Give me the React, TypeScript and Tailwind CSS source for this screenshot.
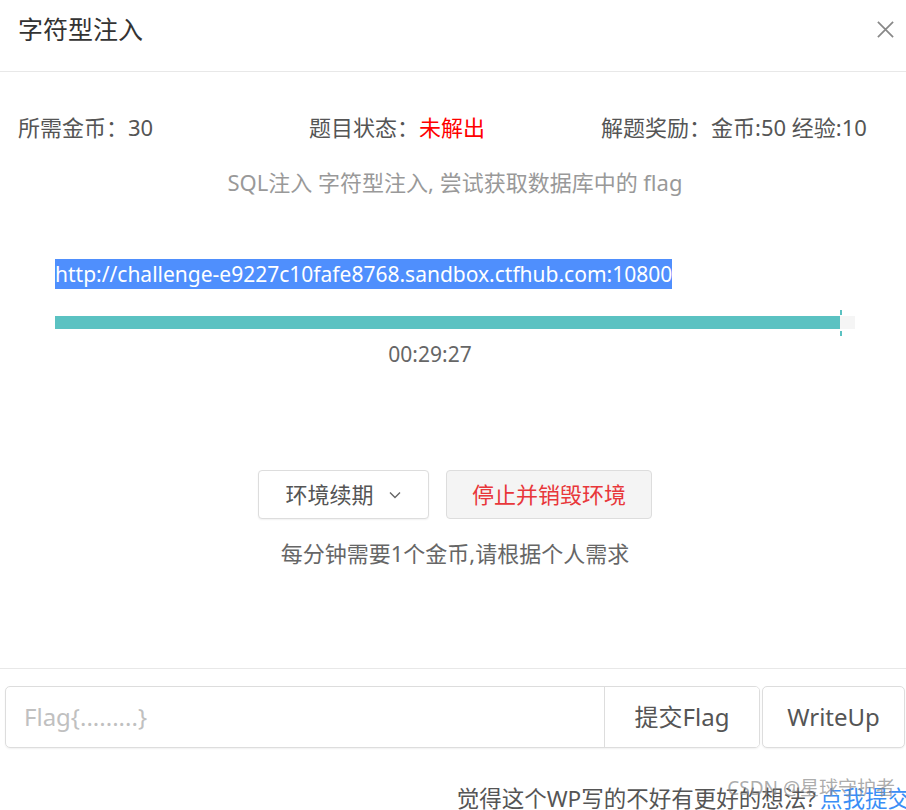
import React from 'react';

const font = { fontFamily: '"Noto Sans", "Noto Sans CJK SC", sans-serif' };

export default function App() {
  return (
    <div className="w-[906px] h-[810px] bg-white overflow-hidden relative" style={font}>
      {/* Header */}
      <div className="h-[72px] flex items-start justify-between pl-[18px] pr-[11px] pt-[13px] border-b border-[#e8e8e8]">
        <span className="text-[25px] leading-[32px] text-[#333]">字符型注入</span>
        <svg width="19" height="19" viewBox="0 0 20 20" className="text-[#888] mt-[7px]">
          <path d="M2 2 L18 18 M18 2 L2 18" stroke="currentColor" strokeWidth="1.8" />
        </svg>
      </div>

      {/* Info row */}
      <div className="flex items-center pl-[18px] pt-[40px] text-[22px] text-[#555] leading-[30px] whitespace-nowrap">
        <span className="w-[291px]">所需金币：30</span>
        <span className="w-[292px]">题目状态：<span className="text-[#f00]">未解出</span></span>
        <span>解题奖励：金币:50 经验:10</span>
      </div>

      <div className="text-center text-[22px] text-[#999] mt-[25px] leading-[30px] pl-[4px]">
        SQL注入 字符型注入, 尝试获取数据库中的 flag
      </div>

      {/* URL + progress */}
      <div className="px-[55px] pt-[62px]">
        <span className="bg-[#4f8ffd] text-white text-[21px] leading-[30px] inline-block">
          http://challenge-e9227c10fafe8768.sandbox.ctfhub.com:10800
        </span>
        <div className="mt-[27px] relative w-[800px] h-[13px] bg-[#f5f5f5]">
          <div className="h-full w-[785px] bg-[#5bc2c2]" />
          <div className="absolute left-[785px] -top-[6px] w-[2px] h-[26px] flex flex-col justify-between">
            <div className="h-[5px] bg-[#5bc2c2]" />
            <div className="h-[5px] bg-[#5bc2c2]" />
          </div>
        </div>
        <div className="w-[750px] text-center text-[21px] text-[#666] mt-[12px] leading-[26px]">00:29:27</div>
      </div>

      {/* Actions */}
      <div className="flex justify-center gap-[17px] mt-[103px] pl-[4px]">
        <button className="w-[171px] h-[49px] rounded-[4px] border border-[#ddd] bg-white text-[22px] text-[#555] flex items-center justify-center gap-[14px] shadow-[0_1px_2px_rgba(0,0,0,0.06)]">
          环境续期
          <svg width="14" height="14" viewBox="0 0 14 14">
            <path d="M2 4.5 L7 9.5 L12 4.5" fill="none" stroke="#666" strokeWidth="1.4" />
          </svg>
        </button>
        <button className="w-[206px] h-[49px] rounded-[4px] border border-[#ddd] bg-[#f4f4f4] text-[22px] text-[#e8373a]">
          停止并销毁环境
        </button>
      </div>
      <div className="text-center text-[22px] text-[#666] mt-[19px] leading-[30px] pl-[4px]">
        每分钟需要1个金币,请根据个人需求
      </div>

      {/* Divider */}
      <div className="mt-[100px] border-t border-[#e8e8e8]" />

      {/* Flag input */}
      <div className="flex items-stretch gap-[2px] pl-[5px] pr-[1px] mt-[17px] h-[62px]">
        <div className="flex flex-1 rounded-[5px] border border-[#ddd] overflow-hidden shadow-[0_1px_2px_rgba(0,0,0,0.06)]">
          <input
            className="flex-1 px-[18px] text-[24px] text-[#333] placeholder-[#c0c0c0] outline-none"
            placeholder="Flag{.........}"
          />
          <button className="w-[155px] border-l border-[#ddd] text-[24px] text-[#555] bg-white">提交Flag</button>
        </div>
        <button className="w-[143px] rounded-[5px] border border-[#ddd] text-[24px] text-[#555] bg-white shadow-[0_1px_2px_rgba(0,0,0,0.06)]">WriteUp</button>
      </div>

      {/* Footer */}
      <div className="mt-[36px] flex justify-end text-[22.5px] leading-[30px] whitespace-nowrap -mr-[4px]">
        <span className="text-[#555]">觉得这个WP写的不好有更好的想法?</span>
        <span className="text-[#3a8ef6] ml-[4px]">点我提交</span>
      </div>
      <div className="absolute right-[11px] top-[776px] text-[19px] text-[#888]/70 leading-[24px] pointer-events-none whitespace-nowrap">
        CSDN @星球守护者
      </div>
    </div>
  );
}
